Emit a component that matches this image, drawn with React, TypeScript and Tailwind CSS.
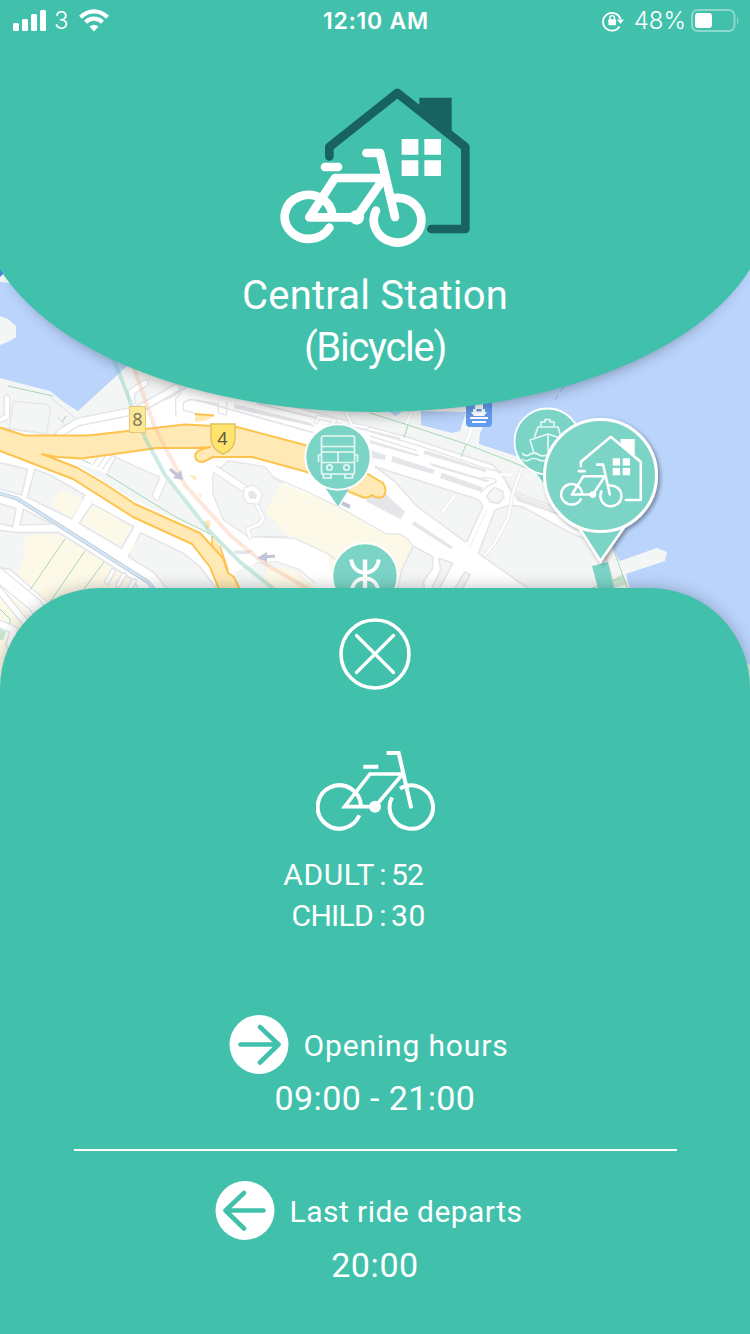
import React from "react";

const WHITE = "#ffffff";

function BikeHouse({ house, stroke }: { house: string; stroke: number }) {
  return (
    <g fill="none" strokeLinecap="round" strokeLinejoin="round" strokeWidth={stroke}>
      <path d="M568 82H665V192L568 112Z" fill={house} />
      <path d="M298 258V230L502 68L706 230V476H604" stroke={house} />
      <path
        d="M515 206h50v47h-50zM583 206h50v47h-50zM515 270h50v47h-50zM583 270h50v47h-50z"
        fill={WHITE}
      />
      <g stroke={WHITE}>
        <path d="M285 290H324" />
        <path d="M409 248H450L495 440" />
        <path d="M460 323H315L238 441H380L462 323" />
        <path d="M307 435A71.500 66 0 1 0 298 472" />
        <path d="M438 421A71.500 67 0 1 0 494 383" />
      </g>
      <circle cx="380" cy="441" r="22" fill={WHITE} />
    </g>
  );
}

function Roads({ items }: { items: [string, number][] }) {
  return (
    <g fill="none" strokeLinejoin="round" strokeLinecap="round">
      {items.map(([d, w], i) => (
        <path key={`e${i}`} d={d} stroke="#e5e6e9" strokeWidth={w + 3} />
      ))}
      {items.map(([d, w], i) => (
        <path key={`f${i}`} d={d} stroke="#ffffff" strokeWidth={w} />
      ))}
    </g>
  );
}

function WestDistrict() {
  return (
    <g transform="translate(0 360) scale(.33333)" strokeLinejoin="round">
      <g fill="#f4f6f6" stroke="#e5e6e9" strokeWidth="5">
        <path d="M-9 306L82 328L65 405L-9 385Z" />
        <path d="M105 328L150 345L254 405L215 477L82 412Z" />
        <path d="M-9 428L48 446L38 500L-9 488Z" />
        <path d="M70 448L155 492L60 495Z" />
        <path d="M277 432L402 500L364 565L238 490Z" />
        <path d="M422 518L550 580L600 620L660 700H510L465 640L385 590Z" />
        <path d="M-9 510L55 518L175 517L260 570L400 660L440 730L160 740L30 628L-9 622Z" />
      </g>
      <path
        d="M220 305L320 340L350 290L480 355L457 405Q462 425 475 420L500 362L625 520L520 475L400 420Z"
        fill="#f4f6f6"
      />
      <path
        d="M310 275L480 352L457 405Q462 425 475 420L500 362"
        fill="none"
        stroke="#e5e6e9"
        strokeWidth="4"
      />
      <path
        d="M276 316L300 285M292 322L316 288M306 328L334 290M322 338L348 290"
        fill="none"
        stroke="#e5e6e9"
        strokeWidth="4"
      />
      <g fill="#fdf9e8">
        <path d="M180 388L248 420L216 474L155 438Z" />
        <path d="M279 436L335 465L395 503L362 560L243 488Z" />
        <path d="M412 535L398 582L388 576Z" />
        <path d="M80 525L170 521L260 574L385 655L400 730L160 740L50 640L74 590L68 565Z" />
      </g>
      <g fill="none" stroke="#e5e6e9" strokeWidth="4">
        <path d="M40 124L140 133Q154 140 150 155L140 222L28 205Z" />
        <path d="M173 170L207 210L165 222M150 110L232 180" />
        <path d="M545 98L527 115V170M570 118L655 132V160L680 165V125M570 118L550 128V150L600 165" />
      </g>
    </g>
  );
}

function CentralDistrict() {
  return (
    <g transform="translate(200 390) scale(.33333)" strokeLinejoin="round">
      <path
        d="M85 213L195 230L220 262L250 280L195 365L265 440L145 440L70 390L38 310L38 255Z"
        fill="#f4f6f6"
        stroke="#e5e6e9"
        strokeWidth="4"
      />
      <path
        d="M245 278L415 350L560 432L600 432L625 450L640 470L605 540L620 610H400L385 495L285 445L258 436L195 365Z"
        fill="#fdf9e8"
      />
      <path
        d="M220 262L310 300L415 350L560 432L600 432L625 448L640 470M145 440L285 445L385 492L410 512M165 520L230 515L300 540L345 580"
        fill="none"
        stroke="#e5e6e9"
        strokeWidth="4"
      />
      <path d="M90 560L130 530L165 522L230 517L300 542L350 605H90Z" fill="#f4f6f6" />
      <path d="M205 530L290 542L360 605H205L190 565Z" fill="#fdf9e8" />
      <g fill="none" strokeLinecap="round">
        <path d="M50 240L140 300" stroke="#e5e6e9" strokeWidth="26" />
        <path d="M45 238L140 300" stroke="#fff" strokeWidth="18" />
        <path d="M168 340L190 385L180 402L142 416L150 442" stroke="#e5e6e9" strokeWidth="14" />
        <path d="M168 340L190 385L180 402L142 416L150 442" stroke="#fff" strokeWidth="8" />
        <path
          d="M140 300L160 294L178 312L172 334L148 332L138 318Z"
          fill="#e5e6e9"
          stroke="#e5e6e9"
          strokeWidth="20"
        />
        <path d="M140 300L160 294L178 312L172 334L148 332L138 318Z" stroke="#fff" strokeWidth="13" />
      </g>
      <path d="M100 482L160 480L145 492L108 492Z" fill="#e5e6e9" />
      <path d="M-10 30L340 128M170 40L600 145" fill="none" stroke="#e5e6e9" strokeWidth="5" />
      <path d="M105 42L330 98L345 110L100 55Z" fill="#e3e5e8" />
      <path d="M440 68L600 105L640 120L445 100Z" fill="#f4f6f6" />
      <path
        d="M348 96L355 82L405 92L385 112M440 68L455 105L500 112"
        fill="none"
        stroke="#e5e6e9"
        strokeWidth="14"
        strokeLinecap="round"
      />
      <path
        d="M348 96L355 82L405 92L385 112M440 68L455 105L500 112"
        fill="none"
        stroke="#fff"
        strokeWidth="8"
        strokeLinecap="round"
      />
    </g>
  );
}

function EastDistrict() {
  return (
    <g transform="translate(370 390) scale(.33333)" strokeLinejoin="round">
      <g fill="#f4f6f6" stroke="#e5e6e9" strokeWidth="5">
        <path d="M15 230L310 324Q335 330 338 350L292 452L285 455L140 348L75 275Z" />
        <path d="M375 360L410 348Q440 345 460 352L600 428L700 470L740 620H510L325 490Z" />
        <path d="M130 468L188 500L188 535L160 575L165 610H80L95 540Z" />
        <path d="M207 505L248 520L200 610H178L205 555L212 540Z" />
        <path d="M285 545L300 555L270 610H245Z" />
      </g>
      <g fill="#e5e6e9">
        <path d="M-15 300L45 310L105 365L92 388L-10 335Z" />
        <path d="M132 393L250 472L240 476L125 403Z" />
        <path d="M5 180L48 196L45 210L5 204Z" />
        <path d="M67 198L195 240L188 252L64 215Z" />
        <path d="M215 248L338 292L334 306L210 264Z" />
        <path d="M0 150L150 195L140 199L0 160ZM165 180L350 240L345 246L160 192Z" />
        <path d="M178 218L360 272L350 276L185 228Z" />
        <path d="M434 318L560 365L580 380L440 332Z" />
      </g>
      <g fill="none" stroke="#e5e6e9" strokeWidth="4">
        <path d="M0 125L150 168L350 236L395 246L405 268L430 305L560 352" />
        <path d="M0 138L140 182" />
        <path d="M335 262L372 266L380 275L350 290L330 310" />
        <path d="M350 360L300 470" strokeWidth="2" />
      </g>
      <path d="M372 292L397 303L402 322L385 340L360 336L350 318Z" fill="#f4f6f6" stroke="#e5e6e9" strokeWidth="5" />
      <g fill="none" strokeLinecap="round">
        <path d="M217 366L254 318" stroke="#e5e6e9" strokeWidth="12" />
        <path d="M217 366L254 318" stroke="#fff" strokeWidth="8" />
        <path d="M455 235L428 312L415 382L375 458L345 495" stroke="#e5e6e9" strokeWidth="12" />
        <path d="M455 235L428 312L415 382L375 458L345 495M392 254H422" stroke="#fff" strokeWidth="7" />
        <path d="M122 72L108 105M308 108L280 180" stroke="#e5e6e9" strokeWidth="13" />
        <path d="M122 72L108 105M308 108L280 180" stroke="#fff" strokeWidth="9" />
      </g>
    </g>
  );
}

function CityMap() {
  return (
    <svg
      className="absolute left-0 top-[250px] h-[450px] w-[750px]"
      viewBox="0 250 750 450"
      aria-hidden="true"
    >
      <defs>
        <filter id="pinShadow" x="-20%" y="-20%" width="140%" height="140%">
          <feDropShadow dx="2" dy="2" stdDeviation="2" floodOpacity="0.4" />
        </filter>
      </defs>
      <rect x="0" y="250" width="750" height="450" fill="#f4f6f6" />

      {/* harbour */}
      <g fill="#bad4fc">
        <path d="M0 282L10 283L130 362L126 367L78 411L65 403L50 391L42 389L0 378Z" />
        <path d="M750 250V665L690 640L628 590L620 562L613 548L600 500L560 470L513 455L479 444L480 433L483 427L500 380L600 320Z" />
        <path d="M421 411V425L452 433L460 431L466 412Z" />
        <path d="M389 411L395 416L402 412Z" />
      </g>
      <path d="M0 267V277L4 273Z" fill="#4d83e6" />
      <path d="M0 316L8 319L16 326V337L10 341L0 345Z" fill="#f4f6f6" />
      <path d="M617 562L657 548L667 552L665 561L626 574L630 590H612Z" fill="#f4f6f6" />
      <path d="M750 665L744 664L750 690Z" fill="#e4ece8" />
      <path d="M555 400L566 383" stroke="#8fb0ef" strokeDasharray="6 4" />

      {/* trunk corridor */}
      <path
        d="M-5 427L53 435L77 420L130 410L170 398L190 385L250 395L370 427L407 437L493 465L505 480L512 494L570 515L600 540L620 600V700H-5Z"
        fill="#ffffff"
        stroke="#e5e6e9"
        strokeWidth="1.500"
      />
      <WestDistrict />
      <CentralDistrict />
      <EastDistrict />
      <path d="M0 590L20 603L50 640L0 690Z" fill="#fdf9e8" />
      <path d="M0 628L6 632L3 640H0Z" fill="#c8e8d0" />
      <path d="M612 580L623 574L627 584L614 588Z" fill="#cfe6d2" />
      <Roads
        items={[
          ["M-3 421L7 417V398", 4],
          ["M145 383L131 392L132 404L138 414", 5],
          ["M60 433L78 422L138 410L176 388", 6],
          ["M107 582L113 571M118 585L124 575M130 588L134 581", 3],
          ["M-5 572L35 605L52 628L30 650", 12],
          ["M-5 585L25 622", 5],
          ["M-5 622L14 630L10 645", 6],
        ]}
      />

      {/* expressway */}
      <g fill="#ffe9b5" stroke="#fec34d" strokeWidth="2" strokeLinejoin="round">
        <path d="M195 414L214 415.500L207 420L195 422Z" stroke="none" />
        <path d="M195 414L214 415.500" />
        <path d="M240 432L275 436L297 443Z" stroke="none" />
        <path d="M204 521L209 520L211 525L207 530Z" stroke="none" />
        <path d="M212 536V548L228 570L220 546" strokeWidth="1.500" />
        <path d="M189 475L196 476V481ZM198 493l3 5v-4z" stroke="none" />
        <path d="M-5 426L25 435.500H88L185 424.500L213 426L237 427L305 445L368 474L383 483Q388 491 383 497Q376 499 372 495Q368 499 362 497L350 492L307 472L252 457H213L203 462Q195 462 195 455Q196 450 210 447L193 448L157 448L82 458.500L57 457L42 454L78 468L105 484L135 504L200 533L223 558L228 573L234 577L241 592H220L210 567L192 544L133 517L73 479L-5 449Z" />
      </g>

      {/* transit lines */}
      <g fill="none">
        <path d="M-5 492L17 498.500L148 582L156 592" stroke="#b9c9da" strokeWidth="4" />
        <path d="M-5 492L17 498.500L148 582L156 592" stroke="#d3e5f3" strokeWidth="2.500" />
        <path d="M113 358L145 438L165 475L210 532L240 562L275 590" stroke="#78c8b8" strokeOpacity="0.38" strokeWidth="4" />
        <path d="M134 368L155 428L185 485L230 535L262 562L310 590" stroke="#f5b48c" strokeOpacity="0.32" strokeWidth="4" />
        <g stroke="#a6d8b6" strokeWidth="1">
          <path d="M8 386L53 396M62 422L66 416M83 460L91 464M106 474L174 516L210 534M30 590L65 539M50 602L85 551M84 589L104 562M0 609L10 619V624" />
          <path d="M370 413L408 425L466 444L540 473M408 425L404 438M466 444L461 457M613 548L628 590M592 588L622 578" />
        </g>
      </g>
      <g stroke="#c3c3da" strokeWidth="3" fill="#c3c3da">
        <path d="M170 469L178 476" />
        <path d="M183 480L173 478L181 470Z" stroke="none" />
        <path d="M275 556L264 557" />
        <path d="M257 558L267 552V562Z" stroke="none" />
        <path d="M342 503L350 507" strokeWidth="4" />
      </g>

      {/* route shields */}
      <rect x="129.500" y="406.500" width="16" height="26" fill="#fde895" stroke="#e2c878" />
      <text x="137.500" y="426" textAnchor="middle" fontSize="18" fill="#7d795f" fontFamily="'Noto Sans', sans-serif">8</text>
      <path d="M211 424H235V438Q235 449 223 454Q211 449 211 438Z" fill="#ffe46e" stroke="#dfc260" strokeWidth="1.500" />
      <text x="222.500" y="445" textAnchor="middle" fontSize="18" fill="#5e5a48" fontFamily="'Noto Sans', sans-serif">4</text>

      {/* pier badge */}
      <rect x="466" y="400" width="26" height="27" rx="4" fill="#639bee" />
      <path d="M475 404H483V409H485V412H487L484 416H474L471 412H473V409H475ZM470 417H488V419H470ZM472 421H486V423H472Z" fill="#fff" />
      <path d="M476.500 409h5v2.500h-5z" fill="#639bee" />

      {/* bus pin */}
      <path d="M325 488H350L338 507Z" fill="#7cd4c6" stroke="#fff" strokeOpacity="0.7" />
      <circle cx="338" cy="457" r="32.700" fill="#7cd4c6" stroke="#fff" strokeWidth="2" />
      <g fill="none" stroke="#e6f7f4" strokeWidth="1.700">
        <rect x="321.500" y="436" width="33" height="38" rx="2" />
        <path d="M321.500 446.500H354.500M321.500 452H354.500M321.500 462.500H354.500M338 452V462.500" />
        <path d="M321.500 455H318.500V462M354.500 455H357.500V462" />
        <circle cx="329.500" cy="467.500" r="2.700" />
        <circle cx="346.500" cy="467.500" r="2.700" />
        <path d="M323.500 474V478H331V474M345 474V478H352.500V474" />
      </g>

      {/* metro pin */}
      <circle cx="365" cy="576" r="32.700" fill="#7cd4c6" stroke="#fff" strokeWidth="2" />
      <g fill="none" stroke="#fff" strokeWidth="3.800">
        <path d="M351.200 559.500C352 567 357 572.500 365 572.500C373 572.500 378 567 378.800 559.500" />
        <path d="M351.200 593C352 584 357 578.500 365 578.500C373 578.500 378 584 378.800 593" />
        <path d="M365 559.500V600" strokeWidth="4.400" />
      </g>

      {/* ferry pin */}
      <path d="M534 471L548 490L560 471Z" fill="#7cd4c6" stroke="#fff" />
      <circle cx="547.500" cy="441.500" r="33" fill="#7cd4c6" stroke="#fff" strokeWidth="1.800" />
      <g fill="none" stroke="#e6f7f4" strokeWidth="1.700" strokeLinejoin="round">
        <path d="M541 426V422H545V419.500H550V422H554V426" />
        <path d="M534.500 437L538 427H558L561 437M534 453L530 440L548 434L566 440L562 453M548 434V454" />
        <path d="M522 453Q525 457 529 455Q534 451 539 455Q544 457 549 454L558 455M522 459Q525 462 529 460Q534 457 539 460Q544 462 549 459L556 460" />
      </g>

      {/* selected pin */}
      <path d="M592 566L608 562L615 592H599Z" fill="#7cd4c6" />
      <g filter="url(#pinShadow)">
        <path d="M578 526L600.500 561L625 526Z" fill="#7cd4c6" stroke="#fff" strokeWidth="2.500" />
        <circle cx="600.500" cy="475.500" r="56" fill="#7cd4c6" stroke="#fff" strokeWidth="3" />
      </g>
      <g transform="translate(537 426.200) scale(.147 .155)">
        <BikeHouse house="#ffffff" stroke={17} />
      </g>
    </svg>
  );
}

function StatusBar() {
  return (
    <div className="grid h-10 w-[750px] grid-cols-[1fr_auto_1fr] items-center pl-[13px] pr-[11px] font-['Inter',sans-serif] text-[24px] leading-10 text-white">
      <div className="flex items-center">
        <svg className="h-6 w-[34px]" viewBox="0 0 34 24" fill="#fff">
          <rect x="0" y="14" width="6" height="8" rx="1.500" />
          <rect x="9" y="10" width="6" height="12" rx="1.500" />
          <rect x="18" y="5" width="6" height="17" rx="1.500" />
          <rect x="27" y="1" width="6" height="21" rx="1.500" />
        </svg>
        <span className="ml-[7px] mt-px w-[25px] font-light">3</span>
        <svg className="h-[23px] w-[30px]" viewBox="0 0 30 23">
          <g fill="none" stroke="#fff" strokeWidth="4.200">
            <path d="M1.500 8.200Q7.500 2.300 15 2.300T28.500 8.200" />
            <path d="M6.500 13.200Q10.300 9.700 15 9.700T23.500 13.200" />
          </g>
          <path d="M10.500 17.500Q15 14 19.500 17.500L15 22.500Z" fill="#fff" />
        </svg>
      </div>
      <span className="mt-px text-[23px] font-semibold tracking-[0.75px]">12:10 AM</span>
      <div className="flex items-center justify-end">
        <svg className="mr-[10px] h-[22px] w-[22px]" viewBox="0 0 22 22">
          <path d="M17.500 16.500A8.900 8.900 0 1 1 18.400 9" fill="none" stroke="#fff" strokeWidth="1.800" />
          <path d="M15 9.500H22L18.500 14Z" fill="#fff" />
          <rect x="6.300" y="9.300" width="7.800" height="6" rx="1" fill="#fff" />
          <path d="M7.900 10V7.800a2.300 2.300 0 0 1 4.600 0V10" fill="none" stroke="#fff" strokeWidth="1.400" />
        </svg>
        <span className="mr-[5px] mt-px font-light">48%</span>
        <svg className="h-6 w-12" viewBox="0 0 48 24">
          <rect x="1" y="1" width="42.500" height="21" rx="5.500" fill="none" stroke="#fff" strokeOpacity="0.4" strokeWidth="2" />
          <rect x="4" y="4" width="17" height="15" rx="3" fill="#fff" />
          <path d="M46 8.500Q49 12 46 15.500Z" fill="#fff" fillOpacity="0.4" />
        </svg>
      </div>
    </div>
  );
}

function BikeIcon() {
  return (
    <svg className="h-[82px] w-[120px]" viewBox="138 449 360 246">
      <g fill="none" stroke="#fff" strokeWidth="12">
        <path d="M280 502H325M350 461H386L424 627" />
        <path d="M400 524H300L224 622H315L398 524" strokeWidth="11" />
        <path d="M273 620A65 65 0 1 0 268 648" />
        <path d="M366 594A65 65 0 1 0 390 568" />
      </g>
      <circle cx="315" cy="622" r="18" fill="#fff" />
    </svg>
  );
}

function ArrowBadge({ flip = false }: { flip?: boolean }) {
  return (
    <svg className={flip ? "h-[60px] w-[60px] -scale-x-100" : "h-[60px] w-[60px]"} viewBox="0 0 60 60">
      <circle cx="30" cy="29.500" r="29.500" fill="#fff" />
      <path
        d="M11.500 29.500H49.500M31 12L49.500 29.500L31 47.500"
        fill="none"
        stroke="#41c1ac"
        strokeWidth="4.600"
        strokeLinecap="round"
        strokeLinejoin="round"
      />
    </svg>
  );
}

export default function App() {
  return (
    <div className="relative flex h-[1334px] w-[750px] flex-col overflow-hidden bg-[#f4f6f6] font-['Roboto',sans-serif] text-white">
      <CityMap />
      <header className="relative -ml-[19px] flex h-[412px] w-[788px] flex-col items-center rounded-b-[50%] bg-[#41c1ac] shadow-[0_20px_16px_-20px_rgba(0,0,0,0.4)]">
        <StatusBar />
        <svg className="mt-[47px] h-[162px] w-[190px]" viewBox="150 50 570 486">
          <BikeHouse house="#18625f" stroke={26} />
        </svg>
        <h1 className="mt-[21px] flex flex-col items-center text-[40px] font-normal leading-[52px]">
          <span className="tracking-[0.2px]">Central Station</span>
          <span className="tracking-[-1.3px]">(Bicycle)</span>
        </h1>
      </header>

      <main className="relative mt-[176px] flex h-[746px] flex-col items-center rounded-t-[100px] bg-[#41c1ac] pt-[30px] shadow-[0_0_16px_rgba(0,0,0,0.25)]">
        <button aria-label="Close" className="h-[72px] w-[72px]">
          <svg viewBox="0 0 72 72" fill="none" stroke="#fff">
            <circle cx="36" cy="36" r="34" strokeWidth="3.600" />
            <path d="M17.500 17.500L54.500 54.500M54.500 17.500L17.500 54.500" strokeWidth="3.200" strokeLinecap="round" />
          </svg>
        </button>
        <div className="mt-[59px] h-[82px] pl-[2px]">
          <BikeIcon />
        </div>
        <dl className="mt-[23px] grid w-full grid-cols-[375px_16px_1fr] text-[30px] font-normal leading-[41px]">
          <dt className="text-right tracking-[0.6px]">ADULT</dt>
          <span className="text-center">:</span>
          <dd className="tracking-[-0.8px]">52</dd>
          <dt className="pr-[2px] text-right tracking-[-0.7px]">CHILD</dt>
          <span className="text-center">:</span>
          <dd className="tracking-[0.6px]">30</dd>
        </dl>
        <section className="mt-[79px] flex flex-col items-center">
          <div className="-ml-[13px] flex h-[60px] items-center">
            <ArrowBadge />
            <span className="ml-[15px] text-[30px] font-normal tracking-[0.85px]">Opening hours</span>
          </div>
          <p className="text-[34px] font-normal leading-[46px] tracking-[0.4px]">
            09:00 - 21:00
          </p>
        </section>
        <hr className="mt-[28px] w-[603px] border-t-2 border-white" />
        <section className="mt-[30px] flex flex-col items-center">
          <div className="-ml-[13px] flex h-[60px] items-center">
            <ArrowBadge flip />
            <span className="ml-[15px] text-[30px] font-normal tracking-[0.45px]">Last ride departs</span>
          </div>
          <p className="text-[34px] font-normal leading-[48px] tracking-[0.6px]">20:00</p>
        </section>
      </main>
    </div>
  );
}
